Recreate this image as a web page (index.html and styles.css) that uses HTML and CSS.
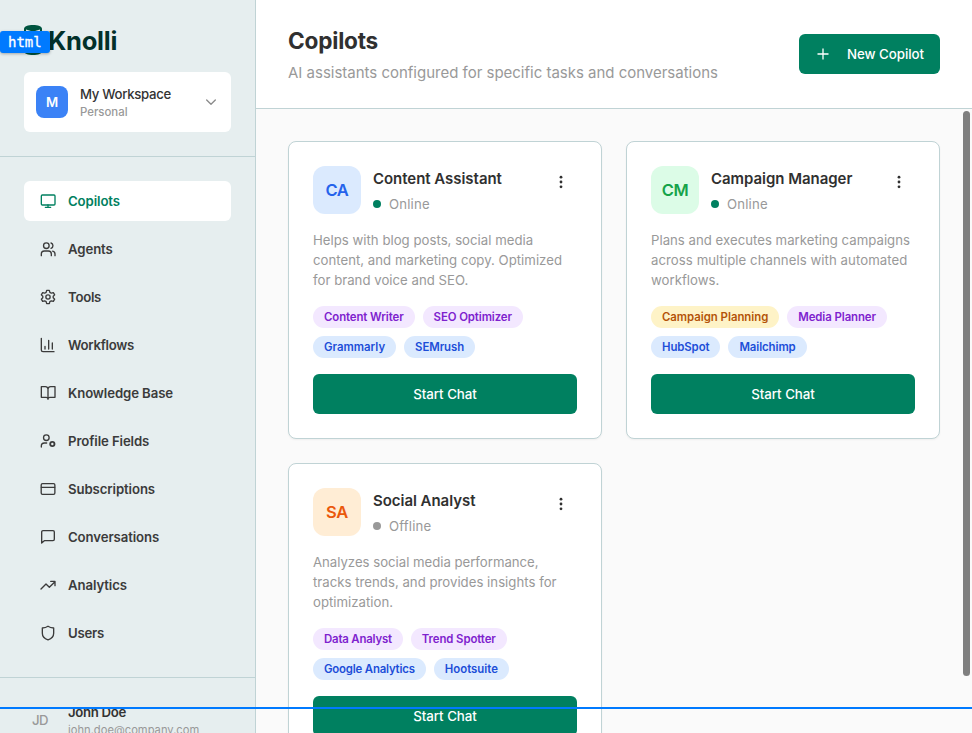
FILE: index.html
```html
<!DOCTYPE html>
<html lang="en">
<head>
<meta charset="utf-8">
<title>Copilots</title>
<link rel="stylesheet" href="styles.css">
</head>
<body>
<div class="app">
  <aside class="sidebar">
    <div class="brand">
      <div class="logo">
        <svg class="logo-mark" width="18" height="30" viewBox="0 0 18 30"><path d="M0 4C0 1.300 4 0 9 0s9 1.300 9 4v22c0 2.700-4 4-9 4s-9-1.300-9-4z" fill="#00543f"/><path d="M2 4.500l5 1.500H2zM16 4.500L11 6h5z" fill="#e6eeef"/></svg>
        <span class="logo-text">Knolli</span>
      </div>
      <div class="workspace">
        <div class="ws-avatar">M</div>
        <div class="ws-info"><div class="ws-name">My Workspace</div><div class="ws-type">Personal</div></div>
        <svg class="icon chevron" viewBox="0 0 24 24"><path d="M5.500 9l6.500 6.500L18.500 9"/></svg>
      </div>
    </div>
    <nav class="nav">
      <a class="nav-item active"><svg class="icon" viewBox="0 0 24 24"><rect x="2" y="3" width="20.500" height="15" rx="1.500"/><path d="M8 21.500h8M12 18v3.500"/></svg>Copilots</a>
      <a class="nav-item"><svg class="icon" viewBox="0 0 24 24"><circle cx="9.500" cy="7" r="4.200"/><path d="M2 22v-2.500A4.500 4.500 0 0 1 6.500 15h6a4.500 4.500 0 0 1 4.500 4.500V22M16.500 3a4.200 4.200 0 0 1 0 8M19 15.300a4.500 4.500 0 0 1 3.500 4.400V22"/></svg>Agents</a>
      <a class="nav-item tight"><svg class="icon" viewBox="0 0 24 24"><circle cx="12" cy="12" r="3.200"/><path d="M10 2h4l.8 3 2.200 1.300 3-.9 2 3.400-2.200 2.200v2l2.200 2.200-2 3.400-3-.9-2.200 1.300-.8 3h-4l-.8-3L7 17.700l-3 .9-2-3.400L4.200 13v-2L2 8.800l2-3.400 3 .9L9.200 5z"/></svg>Tools</a>
      <a class="nav-item tight"><svg class="icon" viewBox="0 0 24 24"><path d="M2 2v17.500A2.500 2.500 0 0 0 4.500 22H21M7.500 18v-4M13 18V5M18.500 18V9"/></svg>Workflows</a>
      <a class="nav-item"><svg class="icon" viewBox="0 0 24 24"><path d="M12 6a4 4 0 0 0-4-3.500H2v16h7a3 3 0 0 1 3 3 3 3 0 0 1 3-3h7.500v-16H16A4 4 0 0 0 12 6zM12 6v15.500"/></svg>Knowledge Base</a>
      <a class="nav-item"><svg class="icon" viewBox="0 0 24 24"><circle cx="9.500" cy="7" r="4.200"/><path d="M2 21v-1.500A4.500 4.500 0 0 1 6.500 15H10"/><circle cx="18.500" cy="16.500" r="3.200" stroke-width="2.800"/></svg>Profile Fields</a>
      <a class="nav-item"><svg class="icon" viewBox="0 0 24 24"><rect x="1.800" y="4" width="20.500" height="16" rx="2"/><path d="M2 9.500h20"/></svg>Subscriptions</a>
      <a class="nav-item"><svg class="icon" viewBox="0 0 24 24"><path d="M21.500 15.500a2 2 0 0 1-2 2H6.500L2.500 21V4.500a2 2 0 0 1 2-2h15a2 2 0 0 1 2 2z"/></svg>Conversations</a>
      <a class="nav-item"><svg class="icon" viewBox="0 0 24 24"><path d="M1.500 18l7.500-7.500 5 5L22.500 7M16 6.500h6.500V13"/></svg>Analytics</a>
      <a class="nav-item tight"><svg class="icon" viewBox="0 0 24 24"><path d="M12 1.800c2.500 1.700 5.500 2.500 8.500 2.700v8c0 5-3.500 8.200-8.500 9.800-5-1.600-8.500-4.800-8.500-9.800v-8c3-.2 6-1 8.500-2.700z"/></svg>Users</a>
    </nav>
    <div class="user">
      <div class="user-avatar">JD</div>
      <div class="user-info"><div class="user-name">John Doe</div><div class="user-mail">john.doe@company.com</div></div>
    </div>
  </aside>
  <main class="main">
    <header class="header">
      <div><h1>Copilots</h1><p class="subtitle">AI assistants configured for specific tasks and conversations</p></div>
      <button class="btn new"><svg class="icon plus" viewBox="0 0 16 16"><path d="M8 2.500v11M2.500 8h11"/></svg>New Copilot</button>
    </header>
    <section class="content">
      <div class="grid">
        <article class="card">
          <div class="card-head">
            <div class="avatar blue">CA</div>
            <div class="card-title"><h2>Content Assistant</h2><div class="status"><i class="dot"></i>Online</div></div>
            <svg class="kebab" viewBox="0 0 16 16"><circle cx="8" cy="3.200" r="1.400"/><circle cx="8" cy="8" r="1.400"/><circle cx="8" cy="12.800" r="1.400"/></svg>
          </div>
          <p class="desc">Helps with blog posts, social media<br>content, and marketing copy. Optimized<br>for brand voice and SEO.</p>
          <div class="tags">
            <div class="tag-row"><span class="tag purple">Content Writer</span><span class="tag purple">SEO Optimizer</span></div>
            <div class="tag-row"><span class="tag sky loose">Grammarly</span><span class="tag sky">SEMrush</span></div>
          </div>
          <button class="btn">Start Chat</button>
        </article>
        <article class="card">
          <div class="card-head">
            <div class="avatar green">CM</div>
            <div class="card-title"><h2>Campaign Manager</h2><div class="status"><i class="dot"></i>Online</div></div>
            <svg class="kebab" viewBox="0 0 16 16"><circle cx="8" cy="3.200" r="1.400"/><circle cx="8" cy="8" r="1.400"/><circle cx="8" cy="12.800" r="1.400"/></svg>
          </div>
          <p class="desc">Plans and executes marketing campaigns<br><span class="loose">across multiple channels with automated</span><br>workflows.</p>
          <div class="tags">
            <div class="tag-row"><span class="tag amber">Campaign Planning</span><span class="tag purple">Media Planner</span></div>
            <div class="tag-row"><span class="tag sky">HubSpot</span><span class="tag sky">Mailchimp</span></div>
          </div>
          <button class="btn">Start Chat</button>
        </article>
        <article class="card">
          <div class="card-head">
            <div class="avatar orange">SA</div>
            <div class="card-title"><h2>Social Analyst</h2><div class="status"><i class="dot off"></i>Offline</div></div>
            <svg class="kebab" viewBox="0 0 16 16"><circle cx="8" cy="3.200" r="1.400"/><circle cx="8" cy="8" r="1.400"/><circle cx="8" cy="12.800" r="1.400"/></svg>
          </div>
          <p class="desc"><span class="snug">Analyzes social media performance,</span><br>tracks trends, and provides insights for<br>optimization.</p>
          <div class="tags">
            <div class="tag-row"><span class="tag purple snug">Data Analyst</span><span class="tag purple">Trend Spotter</span></div>
            <div class="tag-row"><span class="tag sky snug">Google Analytics</span><span class="tag sky loose">Hootsuite</span></div>
          </div>
          <button class="btn">Start Chat</button>
        </article>
      </div>
      <div class="scroll-thumb"></div>
    </section>
  </main>
</div>
<div class="inspect-line"></div>
<div class="inspect-tag">html</div>
</body>
</html>
```
FILE: styles.css
```css
* { box-sizing: border-box; }
body { margin: 0; height: 733px; overflow: hidden; font: 400 13.2px/20px Inter, "Liberation Sans", sans-serif; color: #333; background: #fafafa; }
h1, h2, p { margin: 0; }
.app { display: flex; height: 733px; overflow: hidden; }
.icon { width: 16px; height: 16px; flex: none; fill: none; stroke: currentColor; stroke-width: 2; stroke-linecap: round; stroke-linejoin: round; }

.sidebar { width: 256px; flex: none; background: #e6eeef; border-right: 1px solid #c0d3d5; }
.brand { height: 157px; padding: 24px 24px 0; border-bottom: 1px solid #c0d3d5; }
.logo { display: flex; height: 32px; margin-bottom: 16px; }
.logo-mark { margin-top: 1px; }
.logo-text { margin-left: 6px; font: 700 25.5px/33px Inter, sans-serif; letter-spacing: -.25px; color: #02302a; }
.workspace { display: flex; align-items: center; height: 60px; padding: 0 12px; border-radius: 6px; background: #fff; }
.ws-avatar { width: 32px; height: 32px; border-radius: 8px; background: #3b82f6; color: #fff; font-weight: 600; line-height: 32px; text-align: center; }
.ws-info { flex: 1; margin-left: 12px; }
.ws-name { font-weight: 550; letter-spacing: -.31px; }
.ws-type { font-size: 11.4px; line-height: 16px; font-weight: 450; color: #999; }
.chevron { color: #8b8b8b; stroke-width: 2; }

.nav { display: flex; flex-direction: column; gap: 8px; height: 521px; padding: 24px; border-bottom: 1px solid #c0d3d5; }
.nav-item { display: flex; align-items: center; gap: 12px; height: 40px; flex: none; padding: 0 16px; border-radius: 6px; font-weight: 560; letter-spacing: -.1px; color: #3b3b3b; }
.nav-item.tight { letter-spacing: -.27px; }
.nav-item.active { background: #fff; color: #008060; }

.user { display: flex; align-items: center; gap: 12px; padding: 24px 24px 0; }
.user-avatar { width: 32px; text-align: center; font-weight: 500; letter-spacing: -.5px; color: #999; }
.user-name { font-weight: 560; letter-spacing: -.33px; }
.user-mail { font-size: 11.2px; line-height: 16px; color: #999; }

.main { flex: 1; min-width: 0; display: flex; flex-direction: column; }
.header { display: flex; align-items: center; justify-content: space-between; height: 109px; flex: none; padding: 0 32px; background: #fff; border-bottom: 1px solid #c0d3d5; }
h1 { font-size: 22.6px; line-height: 32px; font-weight: 670; letter-spacing: -.2px; color: #303030; }
.subtitle { margin-top: 4px; margin-bottom: -2px; font-size: 15px; line-height: 24px; letter-spacing: -.01px; color: #999; }
.btn { display: flex; align-items: center; justify-content: center; width: 100%; height: 40px; padding: 0; border: 0; border-radius: 6px; background: #008060; color: #fff; font: 540 13.3px/20px Inter, sans-serif; letter-spacing: -.03px; }
.btn.new { width: 141px; gap: 16px; }
.plus { stroke-width: 1.3; stroke-linecap: butt; }

.content { position: relative; padding: 32px; }
.grid { display: grid; grid-template-columns: 314px 314px; gap: 24px; }
.card { height: 298px; padding: 24px; background: #fff; border: 1px solid #c0d3d5; border-radius: 8px; box-shadow: 0 1px 2px rgba(0, 0, 0, .05); }
.card-head { display: flex; height: 48px; }
.avatar { width: 48px; height: 48px; border-radius: 12px; font-size: 16.5px; font-weight: 600; line-height: 48px; letter-spacing: -.4px; text-align: center; }
.blue { background: #dbeafe; color: #2563eb; }
.green { background: #dcfce7; color: #16a34a; }
.orange { background: #ffedd5; color: #ea580c; }
.card-title { flex: 1; margin-left: 12px; }
h2 { padding-top: 1px; font-size: 15px; line-height: 24px; font-weight: 600; letter-spacing: -.04px; color: #303030; }
.status { display: flex; align-items: center; gap: 8px; margin-top: 3px; letter-spacing: .17px; color: #999; }
.dot { width: 8px; height: 8px; border-radius: 50%; background: #008060; }
.dot.off { background: #999; }
.kebab { width: 16px; height: 16px; margin: 8px 8px 0 0; fill: #303030; }
.desc { margin-top: 16px; letter-spacing: .015px; color: #999; white-space: nowrap; }
.desc .loose { letter-spacing: .06px; }
.desc .snug { letter-spacing: -.02px; }
.tags { display: flex; flex-direction: column; gap: 8px; margin: 16px 0; }
.tag-row { display: flex; gap: 8px; }
.tag { height: 22px; padding: 0 11px; border-radius: 11px; font-size: 11.4px; font-weight: 560; line-height: 22px; letter-spacing: -.09px; white-space: nowrap; }
.tag.loose { letter-spacing: .01px; }
.tag.snug { letter-spacing: -.19px; }
.purple { background: #f3e8ff; color: #7e22ce; }
.sky { background: #dbeafe; color: #1d4ed8; }
.amber { background: #fef3c7; color: #b45309; letter-spacing: -.03px; }

.scroll-thumb { position: absolute; top: 2px; right: 2px; width: 7px; height: 565px; border-radius: 4px; background: #7f7f7f; }
.inspect-line { position: absolute; left: 0; top: 707px; width: 972px; height: 2px; background: #007aff; }
.inspect-tag { position: absolute; left: 0; top: 31px; width: 50px; height: 22px; padding-left: 8px; border-radius: 3px; background: #007aff; color: #fff; font: 14px/22px "DejaVu Sans Mono", monospace; -webkit-text-stroke: .3px #fff; box-shadow: 0 1px 3px rgba(0, 0, 0, .3); }
```
